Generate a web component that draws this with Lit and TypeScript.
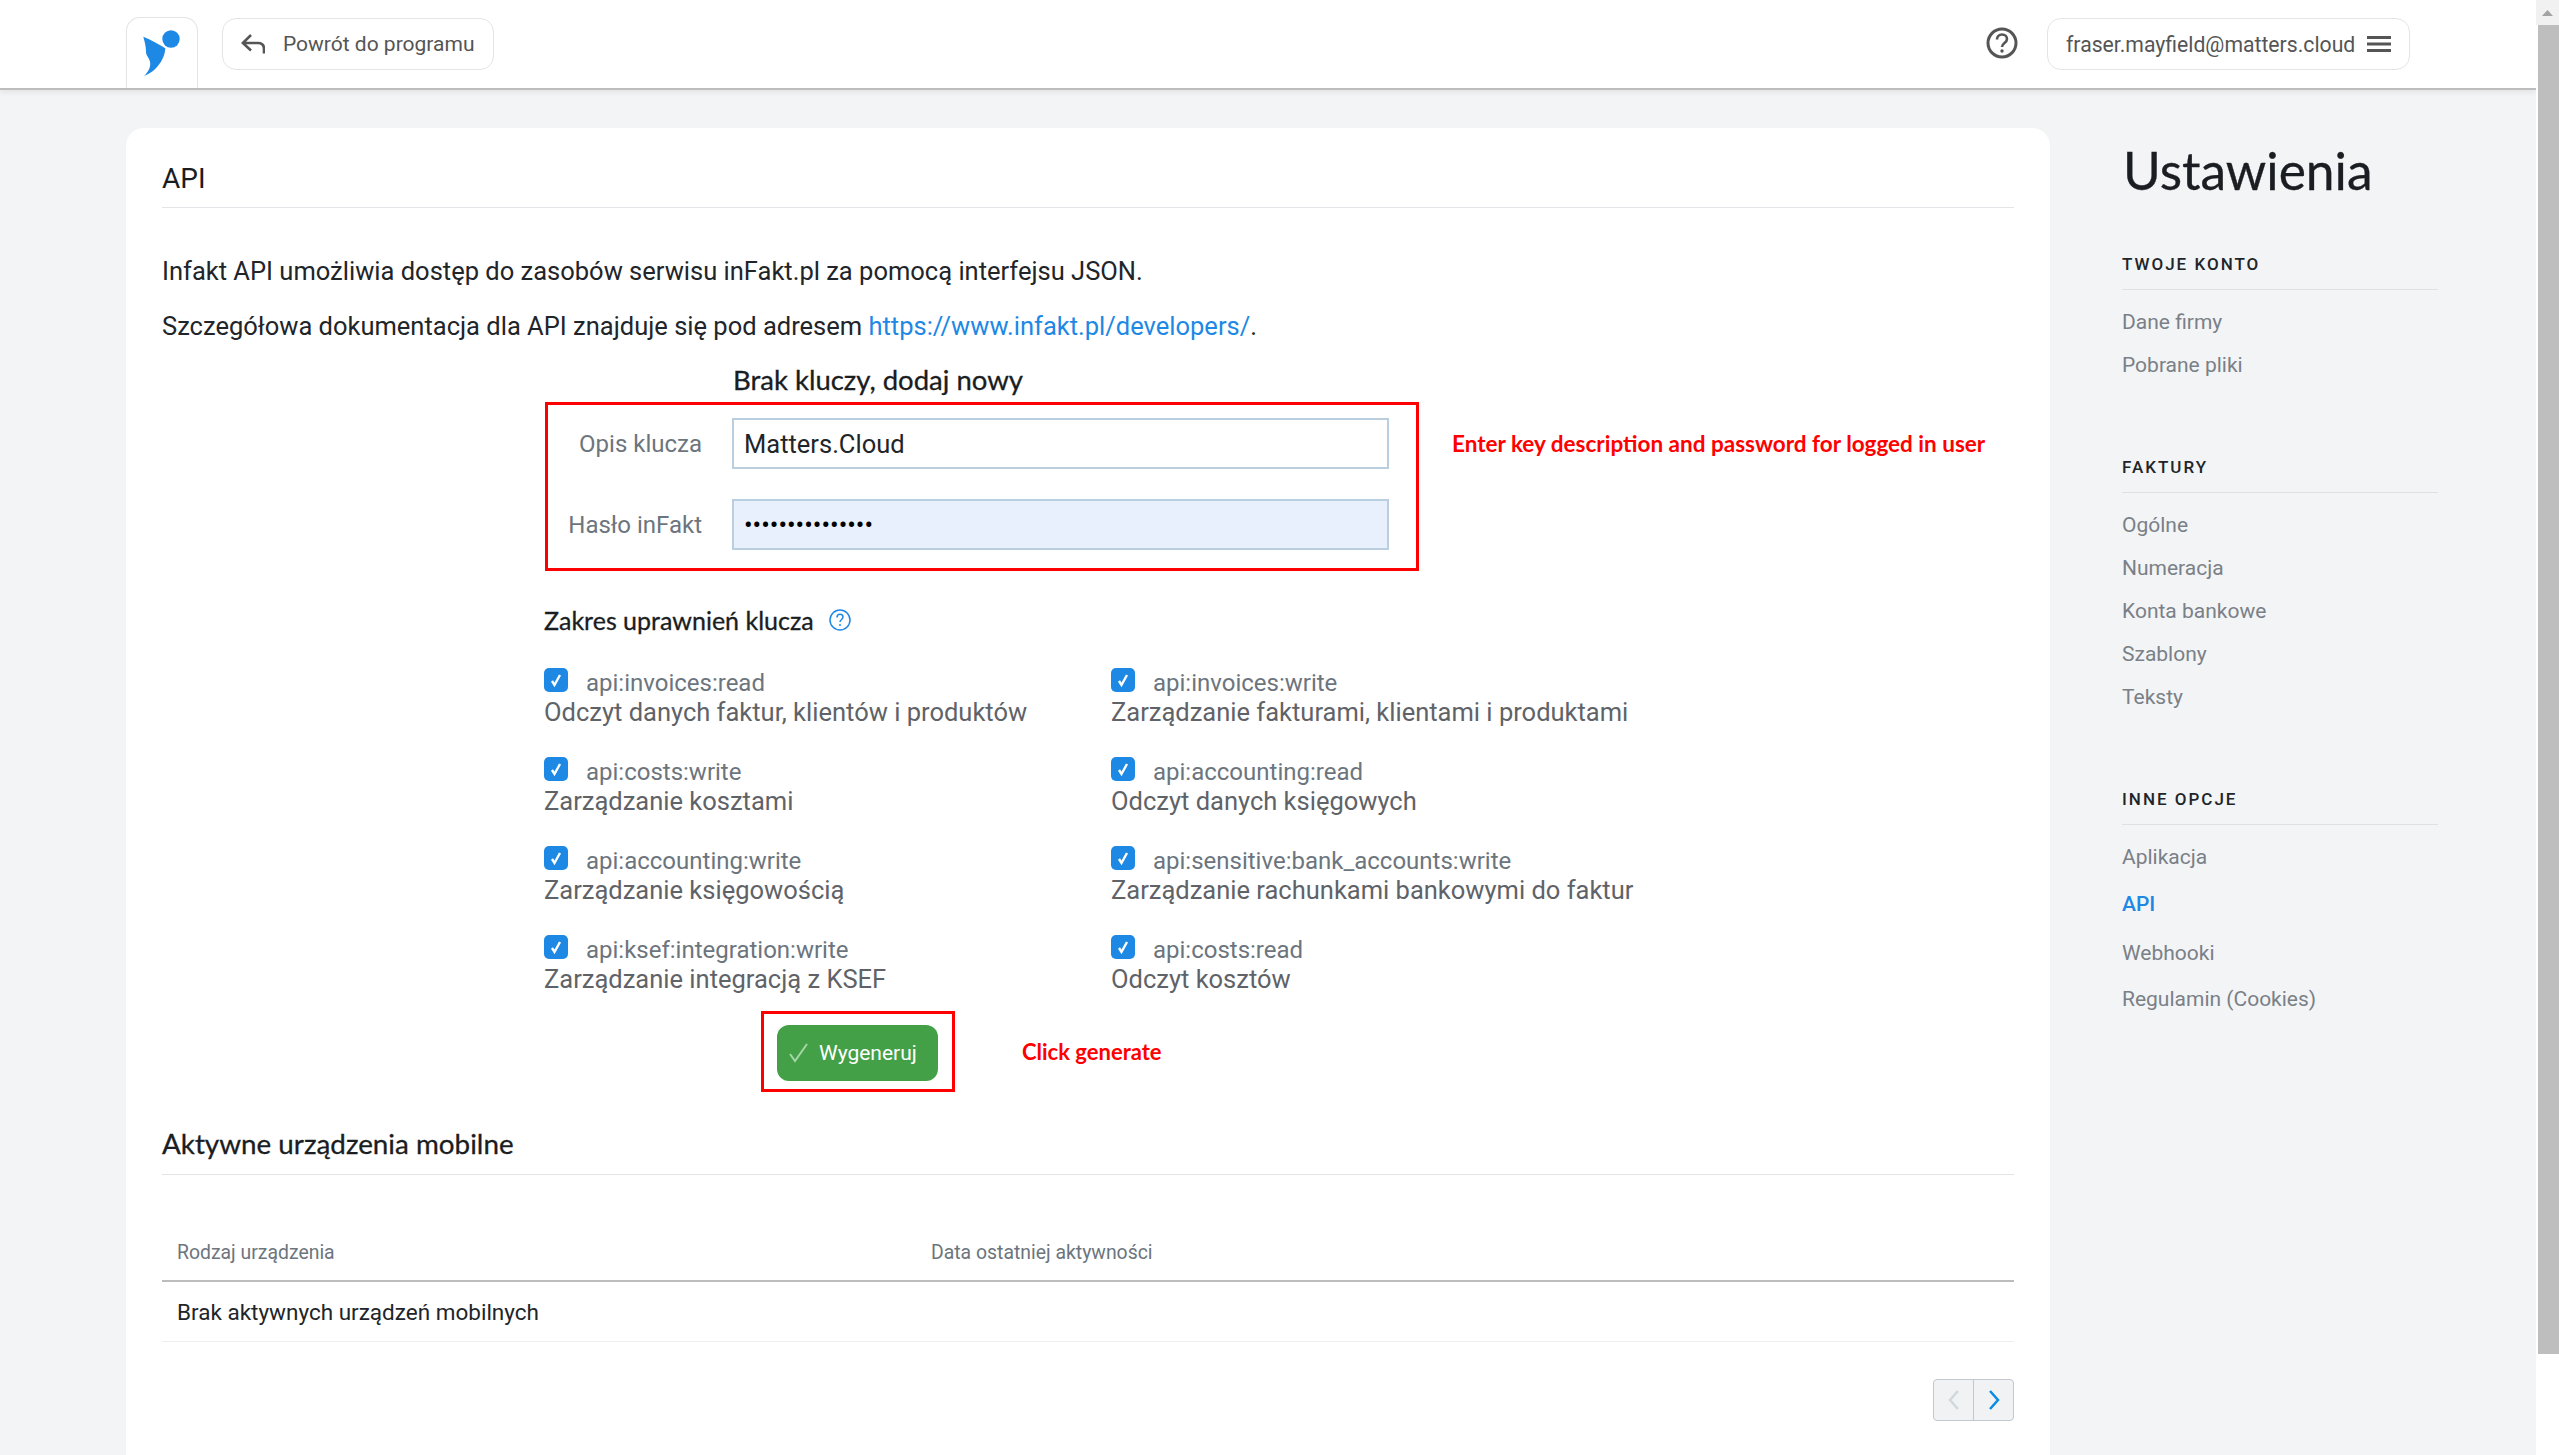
import { LitElement, html, css } from "lit";
import { customElement } from "lit/decorators.js";

const SCOPES = [
  ["api:invoices:read", "Odczyt danych faktur, klientów i produktów", "api:invoices:write", "Zarządzanie fakturami, klientami i produktami"],
  ["api:costs:write", "Zarządzanie kosztami", "api:accounting:read", "Odczyt danych księgowych"],
  ["api:accounting:write", "Zarządzanie księgowością", "api:sensitive:bank_accounts:write", "Zarządzanie rachunkami bankowymi do faktur"],
  ["api:ksef:integration:write", "Zarządzanie integracją z KSEF", "api:costs:read", "Odczyt kosztów"],
];
const NAV: [string, string[]][] = [
  ["TWOJE KONTO", ["Dane firmy", "Pobrane pliki"]],
  ["FAKTURY", ["Ogólne", "Numeracja", "Konta bankowe", "Szablony", "Teksty"]],
  ["INNE OPCJE", ["Aplikacja", "API", "Webhooki", "Regulamin (Cookies)"]],
];

@customElement("app-root")
export class AppRoot extends LitElement {
  static styles = css`
    :host { display: block; height: 1455px; overflow: hidden; font-family: Roboto, sans-serif; background: #fff; }
    * { box-sizing: border-box; }
    .shell { display: flex; height: 1455px; }
    .page { width: 2536px; flex: none; background: #f3f4f6; height: 1455px; overflow: hidden; }
    .scrollbar { flex: 1; background: #fff; display: flex; flex-direction: column; }
    .arrow { height: 25px; background: #f1f1f1; display: flex; align-items: center; justify-content: center; }
    .thumb { height: 1329px; background: #bebebe; margin-left: 2px; }
    header { height: 90px; background: #fff; border-bottom: 2px solid #bdbdbd; box-shadow: 0 2px 6px rgba(0,0,0,.08); display: flex; align-items: flex-start; padding-left: 126px; }
    .logo { width: 72px; height: 71px; margin-top: 17px; border: 1px solid #e4e4e4; border-bottom: none; border-radius: 14px 14px 0 0; display: flex; align-items: flex-start; padding: 10px 0 0 14px; }
    .pill { height: 52px; border: 1px solid #e4e4e4; border-radius: 14px; background: #fff; display: flex; align-items: center; color: #555; font-size: 21px; margin-top: 18px; }
    .back { margin-left: 24px; width: 272px; padding-left: 18px; gap: 18px; }
    .spacer { flex: 1; }
    .help { margin-top: 27px; margin-right: 29px; display: flex; }
    .user { margin-right: 126px; width: 363px; padding-left: 18px; gap: 12px; font-size: 21.2px; }
    .columns { display: flex; align-items: flex-start; padding-left: 126px; padding-top: 38px; }
    .card { width: 1924px; height: 1400px; background: #fff; border-radius: 18px 18px 0 0; padding: 0 36px; flex: none; }
    h2 { margin: 0; font-weight: 400; color: #1a1d21; }
    .title { font-size: 28px; line-height: 33px; padding-top: 34px; height: 80px; border-bottom: 1px solid #e3e5e8; }
    p { margin: 0; font-size: 25.5px; line-height: 34px; color: #212529; }
    .p1 { margin-top: 46px; }
    .p2 { margin-top: 21px; }
    a { color: #1e88e5; text-decoration: none; }
    .fsans { font-family: Lato, sans-serif; -webkit-text-stroke: 0.3px currentColor; }
    .form { margin-left: 382px; }
    .newkey { margin: 19px 0 4px 189px; font-size: 27.5px; line-height: 36px; color: #1a1d21; }
    .row { display: flex; align-items: center; }
    .redbox { border: 3px solid #f00; }
    .inputs { width: 874px; height: 169px; margin-left: 1px; padding-top: 13px; }
    .field { display: flex; align-items: center; height: 51px; margin-bottom: 30px; }
    .field label { width: 154px; text-align: right; font-size: 24px; color: #6c757d; margin-right: 30px; }
    .input { width: 657px; height: 51px; border: 2px solid #b9cfe0; display: flex; align-items: center; padding-left: 10px; font-size: 25.5px; color: #212529; }
    .input.filled { background: #e8f0fe; color: #000; }
    .note { font-family: Lato, sans-serif; font-weight: 700; color: #f00; font-size: 22.5px; line-height: 26px; }
    .n1 { margin-left: 33px; align-self: flex-start; margin-top: 29px; }
    .scope { display: flex; align-items: center; gap: 15px; font-size: 25px; margin-top: 33px; height: 32px; font-weight: 400; color: #1a1d21; }
    .grid { display: grid; grid-template-columns: 567px 1fr; margin-top: 32px; }
    .cell { height: 89px; display: grid; grid-template-columns: 42px 1fr; align-content: start; }
    .check { width: 24px; height: 24px; border-radius: 5px; background: #1e88e5; display: flex; align-items: center; justify-content: center; }
    .code { font-size: 24px; line-height: 30px; color: #6c757d; }
    .desc { grid-column: 1 / 3; font-size: 25.5px; line-height: 28px; color: #5f6368; }
    .genrow { margin-left: 217px; margin-top: -13px; }
    .genbox { width: 194px; height: 81px; padding: 11px 0 0 13px; }
    .btn { width: 161px; height: 56px; background: #43a047; border-radius: 12px; color: #fff; font-size: 21px; display: flex; align-items: center; gap: 9px; padding-left: 11px; }
    .n2 { margin-left: 67px; font-size: 22px; }
    .sub { font-size: 27.8px; line-height: 36px; margin-top: 34px; height: 49px; border-bottom: 1px solid #e3e5e8; color: #1a1d21; }
    .thead { display: grid; grid-template-columns: 754px 1fr; padding: 0 15px 16px; height: 107px; border-bottom: 2px solid #bdbdbd; align-items: end; font-size: 19.4px; color: #6c757d; }
    .tbody { height: 60px; border-bottom: 1px solid #eee; padding-left: 15px; font-size: 22.5px; display: flex; align-items: center; color: #212529; }
    .pager { display: flex; justify-content: flex-end; margin-top: 37px; }
    .pgroup { display: flex; width: 81px; height: 42px; border: 1px solid #c3c8cf; border-radius: 4px; background: #f1f2f4; }
    .pgroup div { flex: 1; display: flex; align-items: center; justify-content: center; }
    .pgroup div + div { border-left: 1px solid #c3c8cf; }
    aside { margin-left: 72px; width: 316px; flex: none; }
    .big { font-size: 51.5px; line-height: 68px; margin: 8px 0 0 1px; font-weight: 400; color: #1a1d21; }
    .navgroup { margin-bottom: 66px; }
    .navgroup h3 { margin: 0; font-size: 17px; font-weight: 500; letter-spacing: 2px; color: #212529; height: 38px; line-height: 24px; border-bottom: 1px solid #dee0e3; }
    .navlist { display: flex; flex-direction: column; padding-top: 13px; }
    .navlist a { font-size: 21px; height: 43px; line-height: 38px; color: #7a8087; }
    .navlist a.active { color: #1e88e5; font-weight: 500; margin: 4px 0 6px; }
    .navlist a.active + a + a { margin-top: 3px; }
    .first { margin-top: 48px; }
  `;

  private check() {
    return html`<span class="check"><svg width="14" height="16" viewBox="0 0 14 16"><path d="M3 9l2.500 4L11 3" fill="none" stroke="#fff" stroke-width="2.400"/></svg></span>`;
  }

  render() {
    return html`<div class="shell">
      <div class="page">
        <header>
          <div class="logo">
            <svg width="42" height="50" viewBox="0 0 42 50"><circle cx="30" cy="11" r="8.700" fill="#1e88e5"/><path d="M2.300 8.700C10 12 18 16 24.300 20.300C24 31 15 44 3 48C8 43 10 38 9 33.700C8 29 5 28 5 23.700C5 19 4 15 2.300 8.700Z" fill="#1e88e5"/></svg>
          </div>
          <div class="pill back">
            <svg width="24" height="22" viewBox="0 0 24 22"><path d="M10 2L1.800 10l8.200 7.500M2 10H17c4 0 6 2.500 6 6v4.500" fill="none" stroke="#555" stroke-width="2.600"/></svg>
            <span>Powrót do programu</span>
          </div>
          <div class="spacer"></div>
          <div class="help">
            <svg width="32" height="32" viewBox="0 0 32 32"><circle cx="16" cy="16" r="14" fill="none" stroke="#555" stroke-width="3"/><path d="M11 12.500c0-3 2.200-5 5-5s5 1.800 5 4.500c0 4-5 4-5 8" fill="none" stroke="#555" stroke-width="2.600"/><circle cx="16" cy="24" r="1.700" fill="#555"/></svg>
          </div>
          <div class="pill user">
            <span>fraser.mayfield@matters.cloud</span>
            <svg width="24" height="18" viewBox="0 0 24 18"><path d="M0 2.500h24M0 9h24M0 15.500h24" stroke="#555" stroke-width="3"/></svg>
          </div>
        </header>
        <div class="columns">
          <main class="card">
            <h2 class="title">API</h2>
            <p class="p1">Infakt API umożliwia dostęp do zasobów serwisu inFakt.pl za pomocą interfejsu JSON.</p>
            <p class="p2">Szczegółowa dokumentacja dla API znajduje się pod adresem <a href="#">https://www.infakt.pl/developers/</a>.</p>
            <div class="form">
              <h2 class="newkey fsans">Brak kluczy, dodaj nowy</h2>
              <div class="row">
                <div class="redbox inputs">
                  <div class="field"><label>Opis klucza</label><div class="input">Matters.Cloud</div></div>
                  <div class="field"><label>Hasło inFakt</label><div class="input filled">•••••••••••••••</div></div>
                </div>
                <span class="note n1">Enter key description and password for logged in user</span>
              </div>
              <h2 class="scope fsans">Zakres uprawnień klucza
                <svg width="22" height="22" viewBox="0 0 22 22"><circle cx="11" cy="11" r="10" fill="none" stroke="#1e88e5" stroke-width="1.500"/><path d="M8 8.500c0-2 1.400-3.200 3-3.200s3 1.100 3 2.800c0 2.400-3 2.400-3 5" fill="none" stroke="#1e88e5" stroke-width="1.500"/><circle cx="11" cy="16" r="1" fill="#1e88e5"/></svg>
              </h2>
              <div class="grid">
                ${SCOPES.flatMap((r) => [
                  html`<div class="cell"><div>${this.check()}</div><span class="code">${r[0]}</span><span class="desc">${r[1]}</span></div>`,
                  html`<div class="cell"><div>${this.check()}</div><span class="code">${r[2]}</span><span class="desc">${r[3]}</span></div>`,
                ])}
              </div>
              <div class="row genrow">
                <div class="redbox genbox">
                  <div class="btn">
                    <svg width="22" height="22" viewBox="0 0 22 22"><path d="M2 12l5 7L19 2" fill="none" stroke="#a5d6a7" stroke-width="2"/></svg>
                    <span>Wygeneruj</span>
                  </div>
                </div>
                <span class="note n2">Click generate</span>
              </div>
            </div>
            <h2 class="sub fsans">Aktywne urządzenia mobilne</h2>
            <div class="thead"><span>Rodzaj urządzenia</span><span>Data ostatniej aktywności</span></div>
            <div class="tbody">Brak aktywnych urządzeń mobilnych</div>
            <div class="pager"><div class="pgroup">
              <div><svg width="14" height="22" viewBox="0 0 14 22"><path d="M11 2L3 11l8 9" fill="none" stroke="#cfd8dc" stroke-width="2.500"/></svg></div>
              <div><svg width="14" height="22" viewBox="0 0 14 22"><path d="M3 2l8 9-8 9" fill="none" stroke="#0a8ae0" stroke-width="2.500"/></svg></div>
            </div></div>
          </main>
          <aside>
            <h1 class="big fsans">Ustawienia</h1>
            <div class="first">
              ${NAV.map(([t, items]) => html`<div class="navgroup"><h3>${t}</h3><div class="navlist">${items.map((i) => html`<a href="#" class=${i === "API" ? "active" : ""}>${i}</a>`)}</div></div>`)}
            </div>
          </aside>
        </div>
      </div>
      <div class="scrollbar">
        <div class="arrow"><svg width="11" height="6" viewBox="0 0 11 6"><path d="M5.500 0L11 6H0z" fill="#a3a3a3"/></svg></div>
        <div class="thumb"></div>
      </div>
    </div>`;
  }
}
